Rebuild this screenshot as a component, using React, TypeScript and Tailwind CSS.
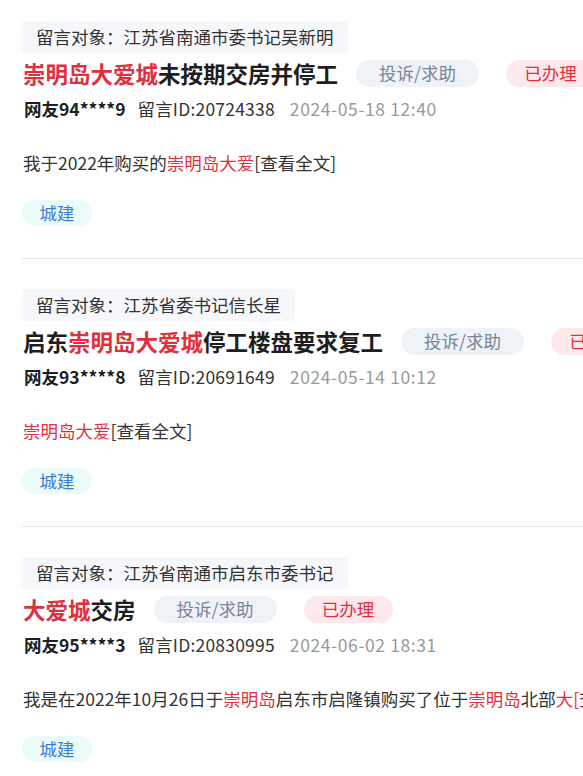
import type { ReactNode } from 'react';

type Seg = { t: string; hl?: boolean };

interface Item {
  target: string;
  title: Seg[];
  user: string;
  id: string;
  time: string;
  content: Seg[];
  tag: string;
}

const items: Item[] = [
  {
    target: '留言对象：江苏省南通市委书记吴新明',
    title: [{ t: '崇明岛大爱城', hl: true }, { t: '未按期交房并停工' }],
    user: '网友94****9',
    id: '20724338',
    time: '2024-05-18 12:40',
    content: [{ t: '我于2022年购买的' }, { t: '崇明岛大爱', hl: true }, { t: '[查看全文]' }],
    tag: '城建',
  },
  {
    target: '留言对象：江苏省委书记信长星',
    title: [{ t: '启东' }, { t: '崇明岛大爱城', hl: true }, { t: '停工楼盘要求复工' }],
    user: '网友93****8',
    id: '20691649',
    time: '2024-05-14 10:12',
    content: [{ t: '崇明岛大爱', hl: true }, { t: '[查看全文]' }],
    tag: '城建',
  },
  {
    target: '留言对象：江苏省南通市启东市委书记',
    title: [{ t: '大爱城', hl: true }, { t: '交房' }],
    user: '网友95****3',
    id: '20830995',
    time: '2024-06-02 18:31',
    content: [
      { t: '我是在2022年10月26日于' },
      { t: '崇明岛', hl: true },
      { t: '启东市启隆镇购买了位于' },
      { t: '崇明岛', hl: true },
      { t: '北部' },
      { t: '大[', hl: true },
      { t: '查看全文]' },
    ],
    tag: '城建',
  },
];

function Segs({ segs }: { segs: Seg[] }): ReactNode {
  return segs.map((s, i) => (
    <span key={i} className={s.hl ? 'text-[#e0303e]' : undefined}>
      {s.t}
    </span>
  ));
}

function MessageCard({ item, last }: { item: Item; last: boolean }) {
  return (
    <div className={last ? '' : 'border-b border-[#e8e8e8] pb-[32px] mb-[30px]'}>
      {/* Recipient */}
      <div className="inline-flex items-center h-[32px] px-[14px] rounded-[3px] bg-[#f5f7fa] text-[17.5px] text-[#333]">
        {item.target}
      </div>

      {/* Title + badges */}
      <div className="flex items-center h-[27px] mt-[7px] whitespace-nowrap">
        <h3 className="text-[22.5px] font-bold leading-[27px] text-[#1e1e1e] pl-[1px]">
          <Segs segs={item.title} />
        </h3>
        <span className="ml-[18px] shrink-0 w-[123px] h-[27px] rounded-full bg-[#eff3f8] text-[#7a8599] text-[17.5px] flex items-center justify-center">
          投诉/求助
        </span>
        <span className="ml-[27px] shrink-0 w-[89px] h-[27px] rounded-full bg-[#fde9eb] text-[#e0303e] text-[17.5px] flex items-center justify-center">
          已办理
        </span>
      </div>

      {/* Meta */}
      <div className="flex items-center h-[26px] mt-[9px] pl-[2px] text-[17.5px] whitespace-nowrap">
        <span className="font-bold text-[#1e1e1e]">{item.user}</span>
        <span className="ml-[12px] text-[#333] tracking-[0.2px]">留言ID:{item.id}</span>
        <span className="ml-[15px] text-[#999] tracking-[0.6px]">{item.time}</span>
      </div>

      {/* Content */}
      <p className="mt-[28px] h-[26px] leading-[26px] pl-[1px] text-[17.5px] text-[#333] whitespace-nowrap">
        <Segs segs={item.content} />
      </p>

      {/* Tag */}
      <div className="mt-[24px] flex">
        <span className="inline-flex items-center justify-center w-[70px] h-[26px] rounded-full bg-[#ebfbfa] text-[#3d7ad6] text-[17.5px]">
          {item.tag}
        </span>
      </div>
    </div>
  );
}

export default function App() {
  return (
    <div
      className="w-[583px] h-[776px] overflow-hidden bg-white pt-[21px] pl-[22px]"
      style={{ fontFamily: '"Noto Sans CJK SC", "Noto Sans", sans-serif' }}
    >
      <div className="w-[760px]">
        {items.map((item, i) => (
          <MessageCard key={item.id} item={item} last={i === items.length - 1} />
        ))}
      </div>
    </div>
  );
}
